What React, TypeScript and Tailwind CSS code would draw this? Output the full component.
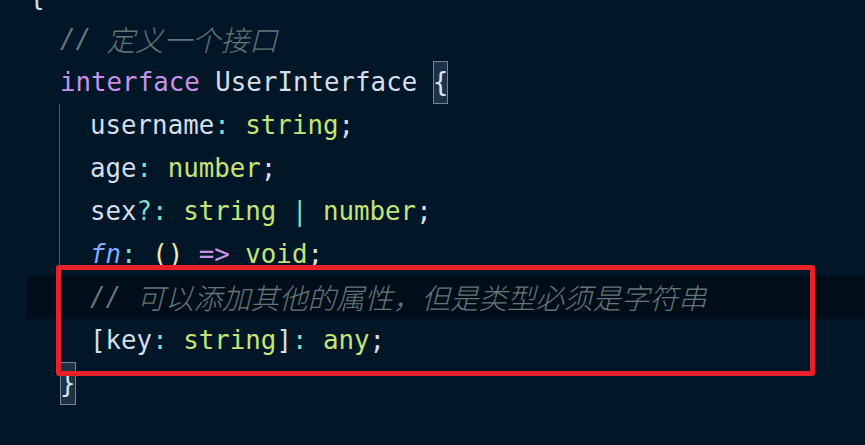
import React from "react";

const mono = "font-['DejaVu_Sans_Mono',monospace] text-[25.8px]";
const cjk = "font-['Noto_Sans_CJK_SC',sans-serif] text-[28.5px] font-light";

const C = {
  text: "text-[#d6deeb]",
  punct: "text-[#7fdbca]",
  type: "text-[#c5e478]",
  kw: "text-[#c792ea]",
  fn: "text-[#82aaff]",
  comment: "text-[#637777]",
  paren: "text-[#efe6b3]",
};

// indentation with the vertical guide on the second level
const Indent = ({ depth }: { depth: number }) => {
  if (depth === 0) return null;
  if (depth === 1) return <span className="w-[31px] shrink-0" />;
  return (
    <>
      <span className="w-[30px] shrink-0" />
      <span className="w-[31px] self-stretch shrink-0 border-l border-[#4a5865]" />
    </>
  );
};

const Line = ({
  depth,
  active,
  children,
}: {
  depth: number;
  active?: boolean;
  children: React.ReactNode;
}) => (
  <div
    className={`flex items-center h-[43px] ml-[27px] pl-[2px] whitespace-pre ${
      active ? "bg-[#010e1a]" : ""
    }`}
  >
    <Indent depth={depth} />
    {children}
  </div>
);

const Match = ({ children }: { children: React.ReactNode }) => (
  <span className="self-stretch flex items-center bg-[#1c3347] outline outline-1 outline-[#78838e] -outline-offset-1">
    {children}
  </span>
);

export default function App() {
  return (
    <div className={`relative w-full h-[445px] overflow-hidden bg-[#011627] ${mono}`}>
      <div className="mt-[-25px]">
        <Line depth={0}>
          <span className="text-[#cfe0f5]">{"{"}</span>
        </Line>
        <Line depth={1}>
          <span className={`${C.comment} italic`}>// </span>
          <span className={`${C.comment} ${cjk} italic`}>定义一个接口</span>
        </Line>
        <Line depth={1}>
          <span className={C.kw}>interface</span>
          <span className={C.text}> UserInterface </span>
          <Match>
            <span className="text-[#d9e6f7]">{"{"}</span>
          </Match>
        </Line>
        <Line depth={2}>
          <span className={C.text}>username</span>
          <span className={C.punct}>: </span>
          <span className={C.type}>string</span>
          <span className={C.text}>;</span>
        </Line>
        <Line depth={2}>
          <span className={C.text}>age</span>
          <span className={C.punct}>: </span>
          <span className={C.type}>number</span>
          <span className={C.text}>;</span>
        </Line>
        <Line depth={2}>
          <span className={C.text}>sex</span>
          <span className={C.punct}>?: </span>
          <span className={C.type}>string </span>
          <span className={C.punct}>| </span>
          <span className={C.type}>number</span>
          <span className={C.text}>;</span>
        </Line>
        <Line depth={2}>
          <span className={`${C.fn} italic`}>fn</span>
          <span className={C.punct}>: </span>
          <span className={C.paren}>() </span>
          <span className={C.kw}>{"=> "}</span>
          <span className={C.type}>void</span>
          <span className={C.text}>;</span>
        </Line>
        <Line depth={2} active>
          <span className={`${C.comment} italic`}>// </span>
          <span className={`${C.comment} ${cjk} italic`}>
            可以添加其他的属性，但是类型必须是字符串
          </span>
        </Line>
        <Line depth={2}>
          <span className={C.text}>[key</span>
          <span className={C.punct}>: </span>
          <span className={C.type}>string</span>
          <span className={C.text}>]</span>
          <span className={C.punct}>: </span>
          <span className={C.type}>any</span>
          <span className={C.text}>;</span>
        </Line>
        <Line depth={1}>
          <Match>
            <span className="text-[#d9e6f7]">{"}"}</span>
          </Match>
        </Line>
      </div>

      {/* red annotation box */}
      <div className="absolute left-[56px] top-[265px] w-[759px] h-[111px] border-[5px] border-[#e8202a] rounded-[3px] pointer-events-none" />
    </div>
  );
}
